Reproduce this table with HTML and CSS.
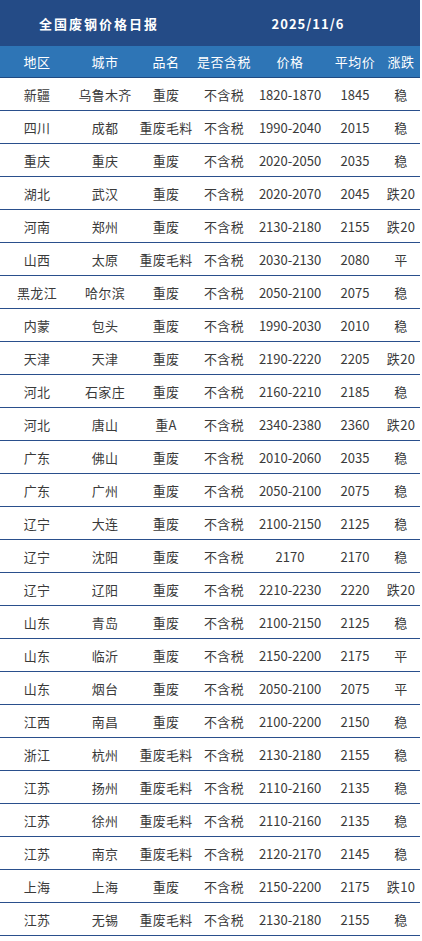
FILE: index.html
```html
<!DOCTYPE html>
<html lang="zh">
<head>
<meta charset="utf-8">
<title>全国废钢价格日报</title>
<link rel="stylesheet" href="styles.css">
</head>
<body>
<div class="sheet">
  <div class="title-bar">
    <div class="title">全国废钢价格日报</div>
    <div class="date">2025/11/6</div>
  </div>
  <div class="row head">
    <div>地区</div><div>城市</div><div>品名</div><div>是否含税</div><div>价格</div><div>平均价</div><div>涨跌</div>
  </div>
  <div class="row"><div>新疆</div><div>乌鲁木齐</div><div>重废</div><div>不含税</div><div class="num">1820-1870</div><div class="num">1845</div><div>稳</div></div>
  <div class="row"><div>四川</div><div>成都</div><div>重废毛料</div><div>不含税</div><div class="num">1990-2040</div><div class="num">2015</div><div>稳</div></div>
  <div class="row"><div>重庆</div><div>重庆</div><div>重废</div><div>不含税</div><div class="num">2020-2050</div><div class="num">2035</div><div>稳</div></div>
  <div class="row"><div>湖北</div><div>武汉</div><div>重废</div><div>不含税</div><div class="num">2020-2070</div><div class="num">2045</div><div>跌20</div></div>
  <div class="row"><div>河南</div><div>郑州</div><div>重废</div><div>不含税</div><div class="num">2130-2180</div><div class="num">2155</div><div>跌20</div></div>
  <div class="row"><div>山西</div><div>太原</div><div>重废毛料</div><div>不含税</div><div class="num">2030-2130</div><div class="num">2080</div><div>平</div></div>
  <div class="row"><div>黑龙江</div><div>哈尔滨</div><div>重废</div><div>不含税</div><div class="num">2050-2100</div><div class="num">2075</div><div>稳</div></div>
  <div class="row"><div>内蒙</div><div>包头</div><div>重废</div><div>不含税</div><div class="num">1990-2030</div><div class="num">2010</div><div>稳</div></div>
  <div class="row"><div>天津</div><div>天津</div><div>重废</div><div>不含税</div><div class="num">2190-2220</div><div class="num">2205</div><div>跌20</div></div>
  <div class="row"><div>河北</div><div>石家庄</div><div>重废</div><div>不含税</div><div class="num">2160-2210</div><div class="num">2185</div><div>稳</div></div>
  <div class="row"><div>河北</div><div>唐山</div><div>重A</div><div>不含税</div><div class="num">2340-2380</div><div class="num">2360</div><div>跌20</div></div>
  <div class="row"><div>广东</div><div>佛山</div><div>重废</div><div>不含税</div><div class="num">2010-2060</div><div class="num">2035</div><div>稳</div></div>
  <div class="row"><div>广东</div><div>广州</div><div>重废</div><div>不含税</div><div class="num">2050-2100</div><div class="num">2075</div><div>稳</div></div>
  <div class="row"><div>辽宁</div><div>大连</div><div>重废</div><div>不含税</div><div class="num">2100-2150</div><div class="num">2125</div><div>稳</div></div>
  <div class="row"><div>辽宁</div><div>沈阳</div><div>重废</div><div>不含税</div><div class="num">2170</div><div class="num">2170</div><div>稳</div></div>
  <div class="row"><div>辽宁</div><div>辽阳</div><div>重废</div><div>不含税</div><div class="num">2210-2230</div><div class="num">2220</div><div>跌20</div></div>
  <div class="row"><div>山东</div><div>青岛</div><div>重废</div><div>不含税</div><div class="num">2100-2150</div><div class="num">2125</div><div>稳</div></div>
  <div class="row"><div>山东</div><div>临沂</div><div>重废</div><div>不含税</div><div class="num">2150-2200</div><div class="num">2175</div><div>平</div></div>
  <div class="row"><div>山东</div><div>烟台</div><div>重废</div><div>不含税</div><div class="num">2050-2100</div><div class="num">2075</div><div>平</div></div>
  <div class="row"><div>江西</div><div>南昌</div><div>重废</div><div>不含税</div><div class="num">2100-2200</div><div class="num">2150</div><div>稳</div></div>
  <div class="row"><div>浙江</div><div>杭州</div><div>重废毛料</div><div>不含税</div><div class="num">2130-2180</div><div class="num">2155</div><div>稳</div></div>
  <div class="row"><div>江苏</div><div>扬州</div><div>重废毛料</div><div>不含税</div><div class="num">2110-2160</div><div class="num">2135</div><div>稳</div></div>
  <div class="row"><div>江苏</div><div>徐州</div><div>重废毛料</div><div>不含税</div><div class="num">2110-2160</div><div class="num">2135</div><div>稳</div></div>
  <div class="row"><div>江苏</div><div>南京</div><div>重废毛料</div><div>不含税</div><div class="num">2120-2170</div><div class="num">2145</div><div>稳</div></div>
  <div class="row"><div>上海</div><div>上海</div><div>重废</div><div>不含税</div><div class="num">2150-2200</div><div class="num">2175</div><div>跌10</div></div>
  <div class="row"><div>江苏</div><div>无锡</div><div>重废毛料</div><div>不含税</div><div class="num">2130-2180</div><div class="num">2155</div><div>稳</div></div>
</div>
</body>
</html>
```
FILE: styles.css
```css
html, body {
  margin: 0;
  padding: 0;
  background: #ffffff;
}
body {
  font-family: "Noto Sans CJK SC", "Noto Sans", sans-serif;
}
.sheet {
  width: 420px;
}
.title-bar {
  display: grid;
  grid-template-columns: 196px 1fr;
  align-items: center;
  height: 46px;
  background: #244b86;
  color: #ffffff;
  font-weight: bold;
  font-size: 13px;
}
.title {
  text-align: center;
  letter-spacing: 2px;
  padding-left: 2px;
}
.date {
  text-align: center;
  letter-spacing: 1px;
  font-size: 13px;
}
.row {
  display: grid;
  grid-template-columns: 74px 62px 60px 56px 76px 54px 38px;
  align-items: center;
  height: 32px;
  border-bottom: 1px solid #2a4f8c;
  font-size: 13px;
  color: #3a3a3a;
  letter-spacing: 0.3px;
}
.row > div {
  text-align: center;
  white-space: nowrap;
}
.row > .num {
  letter-spacing: 0;
}
.row.head {
  background: #2e75b6;
  color: #ffffff;
  height: 31px;
  border-bottom: 1px solid #1f4a82;
  font-size: 13px;
  letter-spacing: 0.5px;
}
```
